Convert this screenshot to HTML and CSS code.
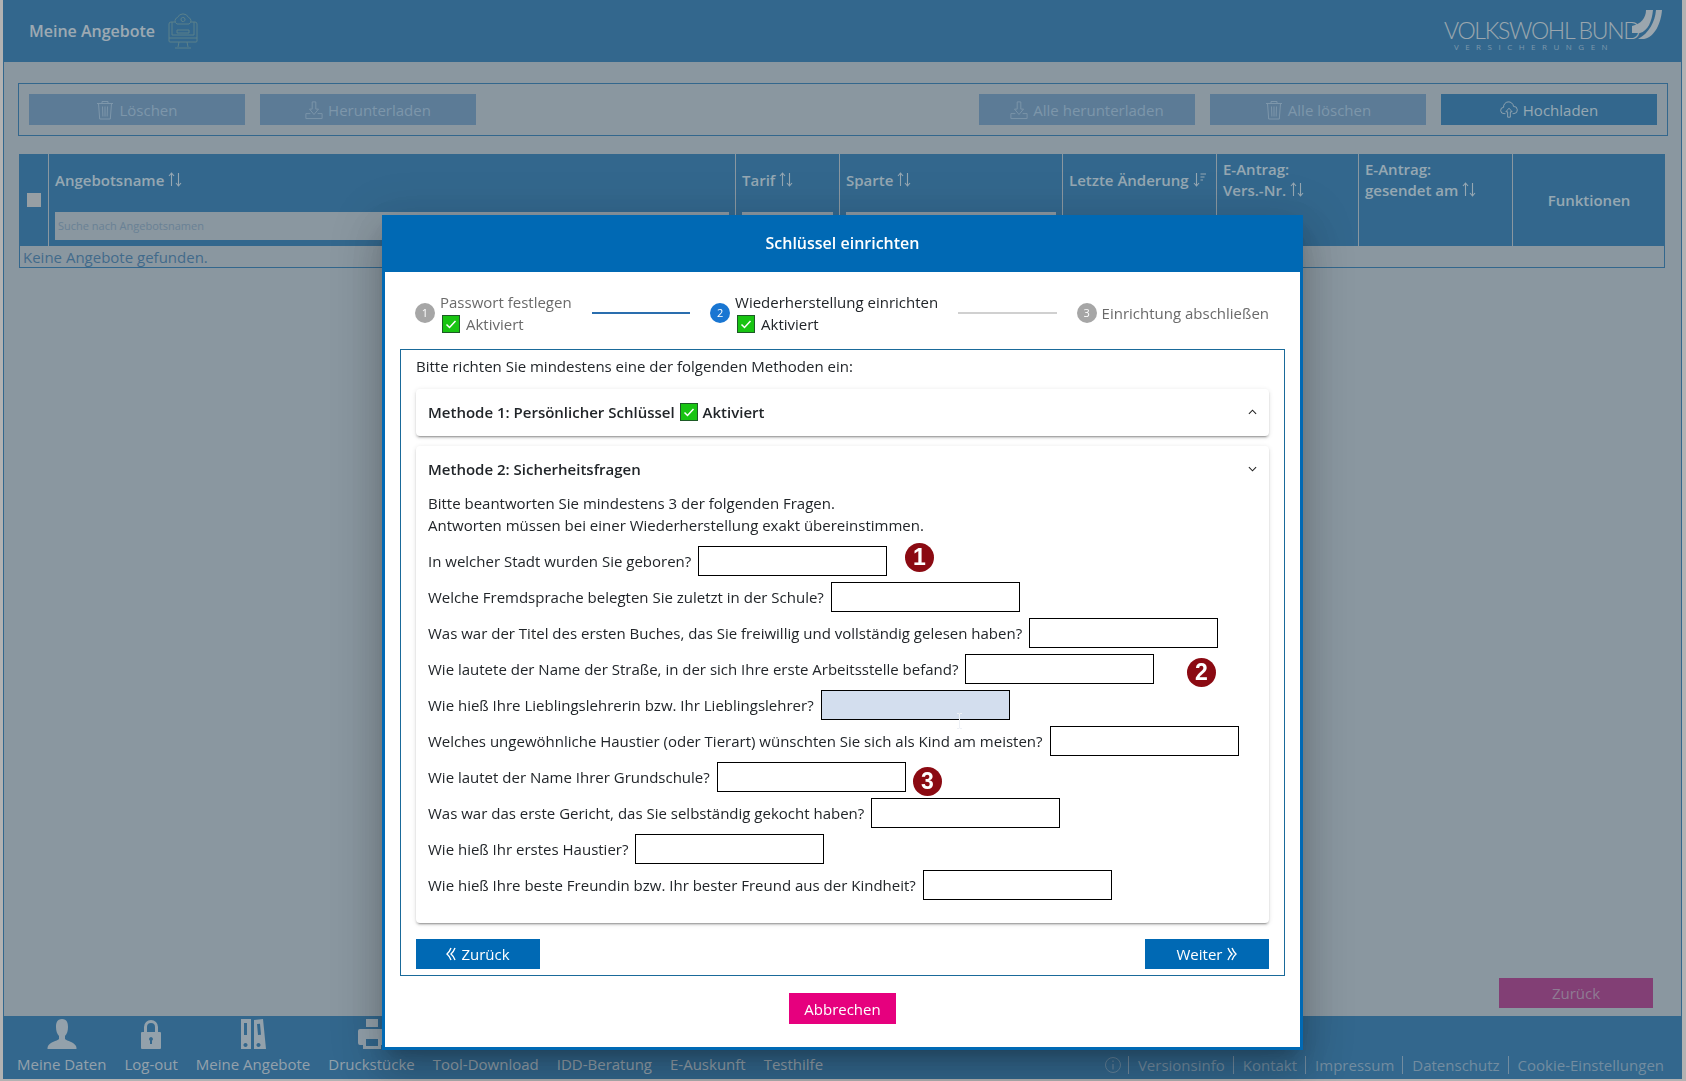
FILE: index.html
```html
<!DOCTYPE html>
<html lang="de">
<head>
    <meta charset="UTF-8">
    <title>Meine Angebote</title>
    <link rel="stylesheet" href="styles.css">
</head>
<body>
    <svg class="sprites" width="0" height="0">
        <symbol id="i-sort" viewBox="0 0 14 15">
            <path d="M3.5 14V1.5M1 4l2.5-3L6 4M10.5 1v12.5M8 11l2.5 3 2.500-3" fill="none" stroke="currentColor" stroke-width="1.100"/>
        </symbol>
        <symbol id="i-sort-down" viewBox="0 0 14 15">
            <path d="M3.500 1v12.500M1 11l2.500 3L6 11M7.500 2H13M7.500 5h4M7.500 8H10" fill="none" stroke="currentColor" stroke-width="1.100"/>
        </symbol>
        <symbol id="i-trash" viewBox="0 0 18 20">
            <path d="M1 3.500h16M6 3.500V1.500h6v2M2.500 3.500l1.200 15.500h10.600l1.200-15.500M6.500 6.500l.4 10M9 6.500v10M11.500 6.500l-.4 10" fill="none" stroke="currentColor" stroke-width="1"/>
        </symbol>
        <symbol id="i-down" viewBox="0 0 20 20">
            <path d="M8 1h4v8h3l-5 6-5-6h3zM1 14v5.500h18V14M1 14h5M14 14h5" fill="none" stroke="currentColor" stroke-width="1"/>
        </symbol>
        <symbol id="i-cloud" viewBox="0 0 20 20">
            <path d="M6 14H4.500a3.500 3.500 0 0 1-.5-7 5.500 5.500 0 0 1 11-1 4 4 0 0 1 .5 8H14M10 8l-3.500 4H8.500v6h3v-6h2z" fill="none" stroke="currentColor" stroke-width="1"/>
        </symbol>
        <symbol id="i-check" viewBox="0 0 18 18">
            <rect x=".5" y=".5" width="17" height="17" fill="#18c412" stroke="#1d5a26"/>
            <path d="M4.500 9.500l3 3 6-6.500" fill="none" stroke="#fff" stroke-width="1.500"/>
        </symbol>
        <symbol id="i-prev" viewBox="0 0 10 14">
            <path d="M5 1C4 3.500 3 5.500 1 7c2 1.500 3 3.500 4 6M9 1C8 3.500 7 5.500 5 7c2 1.500 3 3.500 4 6" fill="none" stroke="currentColor" stroke-width="1.400"/>
        </symbol>
    </svg>

    <div class="page">
        <header class="topbar">
            <span class="topbar-title">Meine Angebote</span>
            <svg class="topbar-icon" viewBox="0 0 30 36">
                <path d="M7 9H3a2 2 0 0 0-2 2v17a1 1 0 0 0 1 1h26a1 1 0 0 0 1-1V11a2 2 0 0 0-2-2h-4M1 25h28M11 29l-1 5M19 29l1 5M7 35h16M9 20h12v-3H9zM4 9v13h22V9" fill="none" stroke="currentColor"/>
                <path d="M9 11a3.500 3.500 0 0 1 .5-6.500 6 6 0 0 1 11 0 3.500 3.500 0 0 1 .5 6.500zM13 7a2 2 0 0 1 4-1M17 6a2 2 0 0 1-4 1" fill="none" stroke="currentColor"/>
            </svg>
            <div class="logo">
                <div class="logo-text">
                    <div class="logo-name">VOLKSWOHL BUND</div>
                    <div class="logo-sub">VERSICHERUNGEN</div>
                </div>
                <svg class="logo-mark" viewBox="0 0 30 30">
                    <path d="M0 24h8C16 22 20 12 21 1h-7c0 8-5 14-14 16zM12 30C23 28 29 14 30 1h-6c-1 12-7 23-18 29z" fill="currentColor"/>
                </svg>
            </div>
        </header>

        <main class="main">
            <div class="toolbar">
                <button class="tool-btn"><svg class="btn-icon"><use href="#i-trash"/></svg>Löschen</button>
                <button class="tool-btn"><svg class="btn-icon"><use href="#i-down"/></svg>Herunterladen</button>
                <button class="tool-btn push"><svg class="btn-icon"><use href="#i-down"/></svg>Alle herunterladen</button>
                <button class="tool-btn"><svg class="btn-icon"><use href="#i-trash"/></svg>Alle löschen</button>
                <button class="tool-btn active"><svg class="btn-icon"><use href="#i-cloud"/></svg>Hochladen</button>
            </div>

            <div class="grid-head">
                <div class="cell cell-check"><span class="fake-check"></span></div>
                <div class="cell">
                    <div class="cell-title">Angebotsname <svg class="sort"><use href="#i-sort"/></svg></div>
                    <div class="filter">Suche nach Angebotsnamen</div>
                </div>
                <div class="cell">
                    <div class="cell-title">Tarif <svg class="sort"><use href="#i-sort"/></svg></div>
                    <div class="filter"></div>
                </div>
                <div class="cell">
                    <div class="cell-title">Sparte <svg class="sort"><use href="#i-sort"/></svg></div>
                    <div class="filter"></div>
                </div>
                <div class="cell">
                    <div class="cell-title">Letzte Änderung <svg class="sort"><use href="#i-sort-down"/></svg></div>
                </div>
                <div class="cell">
                    <div class="cell-title two">E-Antrag:<br>Vers.-Nr. <svg class="sort"><use href="#i-sort"/></svg></div>
                </div>
                <div class="cell">
                    <div class="cell-title two">E-Antrag:<br>gesendet am <svg class="sort"><use href="#i-sort"/></svg></div>
                </div>
                <div class="cell cell-center">Funktionen</div>
            </div>
            <div class="grid-empty">Keine Angebote gefunden.</div>

            <div class="back-row"><button class="back-btn">Zurück</button></div>
        </main>

        <footer class="footer">
            <nav class="foot-nav">
                <a class="foot-item">
                    <svg class="foot-icon" viewBox="0 0 30 30"><path d="M15 0c5 0 6 4 6 8s-1 7-3 9v3c2 2 9 3 11 7 .5 1 .5 2 .5 3H.500c0-1 0-2 .5-3 2-4 9-5 11-7v-3c-2-2-3-5-3-9s1-8 6-8z" fill="currentColor"/></svg>
                    Meine Daten
                </a>
                <a class="foot-item">
                    <svg class="foot-icon" viewBox="0 0 30 30"><path d="M8 13V8a7 7 0 0 1 14 0v5h-3V8a4 4 0 0 0-8 0v5zM6 13h18a1 1 0 0 1 1 1v15a1 1 0 0 1-1 1H6a1 1 0 0 1-1-1V14a1 1 0 0 1 1-1zm9 5a2 2 0 0 0-1 3.700V25h2v-3.300A2 2 0 0 0 15 18z" fill="currentColor" fill-rule="evenodd"/></svg>
                    Log-out
                </a>
                <a class="foot-item">
                    <svg class="foot-icon" viewBox="0 0 30 30"><path d="M3 0h10v30H3zm3 4v12h3V4zm1.500 20a2 2 0 1 0 .01 0zM16 1l9-1 3 30h-12zm3 4l1 11 3-.3-1-11zm1.500 19a2 2 0 1 0 .01 0z" fill="currentColor" fill-rule="evenodd"/></svg>
                    Meine Angebote
                </a>
                <a class="foot-item">
                    <svg class="foot-icon" viewBox="0 0 30 30"><path d="M9 0h12v8H9zM3 10h24a2 2 0 0 1 2 2v12a2 2 0 0 1-2 2h-3v4H6v-4H3a2 2 0 0 1-2-2V12a2 2 0 0 1 2-2zm6 10v7h12v-7z" fill="currentColor" fill-rule="evenodd"/></svg>
                    Druckstücke
                </a>
                <a class="foot-item">
                    <svg class="foot-icon" viewBox="0 0 30 30"><path d="M6 26h18v4H6z" fill="currentColor"/></svg>
                    Tool-Download
                </a>
                <a class="foot-item">
                    <svg class="foot-icon" viewBox="0 0 30 30"></svg>
                    IDD-Beratung
                </a>
                <a class="foot-item">
                    <svg class="foot-icon" viewBox="0 0 30 30"><path d="M11 28h8l-4 2z" fill="currentColor"/></svg>
                    E-Auskunft
                </a>
                <a class="foot-item">
                    <svg class="foot-icon" viewBox="0 0 30 30"><path d="M11 27h8v3h-8z" fill="currentColor"/></svg>
                    Testhilfe
                </a>
            </nav>
            <div class="foot-links">
                <svg class="info" viewBox="0 0 16 16"><circle cx="8" cy="8" r="7.500" fill="none" stroke="currentColor" stroke-width=".8"/><path d="M8 3.500v1.500M8 7v5.500" stroke="currentColor"/></svg>
                <a>Versionsinfo</a>
                <a>Kontakt</a>
                <a>Impressum</a>
                <a>Datenschutz</a>
                <a>Cookie-Einstellungen</a>
            </div>
        </footer>
    </div>

    <div class="overlay"></div>

    <div class="modal">
        <div class="modal-head">Schlüssel einrichten</div>

        <div class="steps">
            <div class="step done">
                <span class="step-num">1</span>
                <div class="step-text">
                    <div>Passwort festlegen</div>
                    <div class="step-state"><svg class="check"><use href="#i-check"/></svg>Aktiviert</div>
                </div>
            </div>
            <span class="step-line blue"></span>
            <div class="step current">
                <span class="step-num">2</span>
                <div class="step-text">
                    <div>Wiederherstellung einrichten</div>
                    <div class="step-state"><svg class="check"><use href="#i-check"/></svg>Aktiviert</div>
                </div>
            </div>
            <span class="step-line"></span>
            <div class="step done">
                <span class="step-num">3</span>
                <div class="step-text">Einrichtung abschließen</div>
            </div>
        </div>

        <div class="content">
            <p class="intro">Bitte richten Sie mindestens eine der folgenden Methoden ein:</p>

            <div class="panel panel-closed">
                <div class="panel-title">
                    <span>Methode 1: Persönlicher Schlüssel</span>
                    <svg class="check"><use href="#i-check"/></svg>
                    <span>Aktiviert</span>
                    <svg class="chevron" viewBox="0 0 10 6"><path d="M1 5l4-4 4 4" fill="none" stroke="#222" stroke-width="1.200"/></svg>
                </div>
            </div>

            <div class="panel">
                <div class="panel-title">
                    <span>Methode 2: Sicherheitsfragen</span>
                    <svg class="chevron" viewBox="0 0 10 6"><path d="M1 1l4 4 4-4" fill="none" stroke="#222" stroke-width="1.200"/></svg>
                </div>
                <p class="hint">Bitte beantworten Sie mindestens 3 der folgenden Fragen.<br>Antworten müssen bei einer Wiederherstellung exakt übereinstimmen.</p>
                <div class="question"><label>In welcher Stadt wurden Sie geboren?</label><input type="text"></div>
                <div class="question"><label>Welche Fremdsprache belegten Sie zuletzt in der Schule?</label><input type="text"></div>
                <div class="question"><label>Was war der Titel des ersten Buches, das Sie freiwillig und vollständig gelesen haben?</label><input type="text"></div>
                <div class="question"><label>Wie lautete der Name der Straße, in der sich Ihre erste Arbeitsstelle befand?</label><input type="text"></div>
                <div class="question"><label>Wie hieß Ihre Lieblingslehrerin bzw. Ihr Lieblingslehrer?</label><input type="text" class="hover"></div>
                <div class="question"><label>Welches ungewöhnliche Haustier (oder Tierart) wünschten Sie sich als Kind am meisten?</label><input type="text"></div>
                <div class="question"><label>Wie lautet der Name Ihrer Grundschule?</label><input type="text"></div>
                <div class="question"><label>Was war das erste Gericht, das Sie selbständig gekocht haben?</label><input type="text"></div>
                <div class="question"><label>Wie hieß Ihr erstes Haustier?</label><input type="text"></div>
                <div class="question"><label>Wie hieß Ihre beste Freundin bzw. Ihr bester Freund aus der Kindheit?</label><input type="text"></div>
            </div>

            <div class="content-nav">
                <button class="nav-btn"><svg class="nav-icon"><use href="#i-prev"/></svg>Zurück</button>
                <button class="nav-btn">Weiter<svg class="nav-icon flip"><use href="#i-prev"/></svg></button>
            </div>
        </div>

        <div class="modal-foot"><button class="cancel-btn">Abbrechen</button></div>
    </div>

    <span class="badge b1">1</span>
    <span class="badge b2">2</span>
    <span class="badge b3">3</span>
    <svg class="cursor" viewBox="0 0 7 16"><path d="M1 .5h2l.5.5.5-.5h2M3.500 1v14M1 15.500h2l.5-.5.5.5h2" fill="none" stroke="#eef1f6"/></svg>
</body>
</html>
```

FILE: styles.css
```css
*{
    box-sizing: border-box;
}
html, body{
    margin: 0;
    height: 100%;
}
body{
    background-color: #fff;
    font-family: "Open Sans", sans-serif;
    font-size: 15px;
    color: #212529;
    overflow: hidden;
}
button{
    font-family: inherit;
    font-size: 15px;
    border: 0;
}
p{
    margin: 0;
}
.sprites{
    position: absolute;
}

/* page behind the dialog */
.page{
    margin-left: 3px;
    width: 1679px;
    height: 1079px;
    display: flex;
    flex-direction: column;
}
.topbar{
    height: 62px;
    flex: none;
    display: flex;
    align-items: center;
    padding-left: 26px;
    padding-right: 20px;
    background-color: #0069b4;
    color: #d4ecff;
}
.topbar-title{
    font-size: 16px;
    font-weight: 600;
    margin-top: 0;
}
.topbar-icon{
    width: 30px;
    height: 36px;
    margin-left: 13px;
    color: #4f9bb0;
}
.logo{
    margin-left: auto;
    display: flex;
    align-items: flex-start;
    gap: 8px;
    color: #d0e6f6;
    margin-top: 8px;
    margin-bottom: auto;
}
.logo-text{
    margin-top: 11px;
    width: 180px;
    text-align: center;
}
.logo-name{
    font-family: Lato, sans-serif;
    font-weight: 300;
    font-size: 23px;
    line-height: 23px;
    letter-spacing: -1.300px;
    white-space: nowrap;
}
.logo-sub{
    font-size: 8px;
    line-height: 10px;
    letter-spacing: 6.500px;
    color: #94c6ee;
    white-space: nowrap;
}
.logo-mark{
    width: 30px;
    height: 30px;
    margin-top: 1px;
}
.main{
    flex: 1;
    display: flex;
    flex-direction: column;
    background-color: #aec8da;
    border-left: 1px solid #0069b4;
    border-right: 1px solid #0069b4;
    padding: 21px 13px 0 14px;
}
.toolbar{
    height: 53px;
    display: flex;
    gap: 15px;
    padding: 10px;
    border: 1px solid #0069b4;
    margin-right: 0;
}
.tool-btn{
    width: 216px;
    height: 31px;
    display: flex;
    align-items: center;
    justify-content: center;
    gap: 5px;
    background-color: #5290c6;
    color: #94c6ee;
}
.tool-btn.push{
    margin-left: auto;
}
.tool-btn.active{
    background-color: #0069b4;
    color: #c6e8ff;
}
.btn-icon{
    width: 18px;
    height: 20px;
}
.grid-head{
    margin-top: 18px;
    margin-left: 1px;
    width: 1646px;
    height: 92px;
    display: grid;
    grid-template-columns: 29px 687px 104px 223px 154px 142px 154px 153px;
    background-color: #0069b4;
    color: #c6e8ff;
    font-weight: 600;
}
.cell{
    position: relative;
    padding: 0 6px;
    border-left: 1px solid #aec8da;
}
.cell:first-child{
    border-left: 0;
}
.cell-check, .cell-center{
    display: flex;
    align-items: center;
    justify-content: center;
}
.fake-check{
    width: 14px;
    height: 14px;
    background-color: #c9d8e2;
}
.cell-title{
    height: 58px;
    padding-top: 15px;
    line-height: 22px;
    white-space: nowrap;
}
.cell-title.two{
    padding-top: 5px;
    line-height: 21px;
}
.sort{
    width: 14px;
    height: 15px;
    vertical-align: -1px;
    font-weight: 400;
}
.filter{
    height: 28px;
    background-color: #aec8da;
    color: #6d9cc4;
    font-size: 11px;
    font-weight: 400;
    line-height: 28px;
    padding-left: 3px;
}
.grid-empty{
    margin-left: 1px;
    width: 1646px;
    height: 22px;
    padding-left: 3px;
    line-height: 22px;
    border: 1px solid #0069b4;
    border-top: 0;
    color: #1a6fb0;
}
.back-row{
    margin-top: auto;
    margin-bottom: 8px;
    display: flex;
    justify-content: flex-end;
    padding-right: 15px;
}
.back-btn{
    width: 154px;
    height: 30px;
    background-color: #9e1884;
    color: #b890c0;
}
.footer{
    height: 63px;
    flex: none;
    display: flex;
    align-items: flex-end;
    padding: 0 18px 5px 14px;
    background-color: #0069b4;
    color: #c0dcf0;
}
.foot-nav{
    display: flex;
    gap: 18px;
}
.foot-item{
    display: flex;
    flex-direction: column;
    align-items: center;
    line-height: 20px;
}
.foot-icon{
    width: 30px;
    height: 30px;
    margin-bottom: 5px;
}
.foot-links{
    margin-left: auto;
    display: flex;
    align-items: center;
    height: 18px;
    margin-bottom: 0;
    color: #7fb2da;
}
.foot-links a{
    padding: 0 8px 0 9px;
    border-left: 1px solid #7fb2da;
    line-height: 18px;
}
.foot-links a:last-child{
    padding-right: 0;
}
.info{
    width: 16px;
    height: 16px;
    margin-right: 7px;
}

/* dialog */
.overlay{
    position: fixed;
    inset: 0;
    background-color: rgba(102, 102, 102, 0.5);
}
.modal{
    position: fixed;
    left: 382px;
    top: 215px;
    width: 921px;
    height: 835px;
    border: 3px solid #0069b4;
    border-top: 0;
    background-color: #fff;
    box-shadow: 0 11px 15px -7px rgba(0,0,0,.2), 0 24px 38px 3px rgba(0,0,0,.14), 0 9px 46px 8px rgba(0,0,0,.12);
}
.modal-head{
    height: 57px;
    line-height: 57px;
    margin: 0 -3px;
    text-align: center;
    background-color: #0069b4;
    color: #fff;
    font-size: 16px;
    font-weight: 600;
}
.steps{
    height: 77px;
    display: flex;
    align-items: center;
    gap: 20px;
    padding: 5px 31px 0 30px;
}
.step{
    display: flex;
    align-items: center;
    gap: 5px;
    white-space: nowrap;
}
.step.done{
    color: #6a6a6a;
}
.step-num{
    width: 20px;
    height: 20px;
    border-radius: 50%;
    background-color: #a6a6a6;
    color: #fff;
    font-size: 11px;
    line-height: 20px;
    text-align: center;
}
.step.current .step-num{
    background-color: #1976d2;
}
.step-text{
    line-height: 22px;
}
.step-state{
    display: flex;
    align-items: center;
    gap: 6px;
    margin-left: 2px;
}
.step-line{
    flex: 1;
    height: 2px;
    background-color: #d0d0d0;
}
.step-line.blue{
    background-color: #2a6eae;
}
.check{
    width: 18px;
    height: 18px;
    flex: none;
}
.content{
    margin: 0 15px;
    height: 627px;
    border: 1px solid #1a6a9a;
    padding: 5px 15px 0;
}
.intro{
    line-height: 22px;
    margin-bottom: 12px;
}
.panel{
    background-color: #fff;
    border-radius: 4px;
    box-shadow: 0 3px 1px -2px rgba(0,0,0,.2), 0 2px 2px 0 rgba(0,0,0,.14), 0 1px 5px 0 rgba(0,0,0,.12);
    padding: 0 12px;
    height: 477px;
}
.panel-closed{
    height: 47px;
    margin-bottom: 10px;
}
.panel-title{
    height: 46px;
    display: flex;
    align-items: center;
    gap: 5px;
    font-weight: 600;
}
.chevron{
    width: 9px;
    height: 6px;
    margin-left: auto;
    margin-right: 0;
}
.hint{
    line-height: 22px;
    margin-bottom: 10px;
}
.question{
    display: flex;
    align-items: center;
    gap: 7px;
    height: 30px;
    margin-bottom: 6px;
    white-space: nowrap;
}
.question input{
    width: 189px;
    height: 30px;
    border: 1px solid #000;
    background-color: #fff;
}
.question input.hover{
    background-color: #d3deee;
}
.content-nav{
    display: flex;
    justify-content: space-between;
    margin-top: 16px;
}
.nav-btn{
    width: 124px;
    height: 30px;
    display: flex;
    align-items: center;
    justify-content: center;
    gap: 5px;
    background-color: #0069b4;
    color: #fff;
    font-weight: 500;
}
.nav-icon{
    width: 10px;
    height: 14px;
}
.nav-icon.flip{
    transform: scaleX(-1);
}
.modal-foot{
    display: flex;
    justify-content: center;
    margin-top: 17px;
}
.cancel-btn{
    width: 107px;
    height: 31px;
    background-color: #e6007e;
    color: #fff;
    font-weight: 500;
}

/* numbered marks drawn over the form */
.badge{
    position: fixed;
    width: 29px;
    height: 29px;
    border-radius: 50%;
    background-color: #8b0a12;
    color: #fff;
    font-family: "Liberation Sans", sans-serif;
    font-size: 23px;
    font-weight: 700;
    line-height: 29px;
    text-align: center;
}
.b1{
    left: 905px;
    top: 543px;
}
.b2{
    left: 1187px;
    top: 658px;
}
.b3{
    left: 913px;
    top: 767px;
}
.cursor{
    position: fixed;
    left: 956px;
    top: 713px;
    width: 7px;
    height: 16px;
}
```
